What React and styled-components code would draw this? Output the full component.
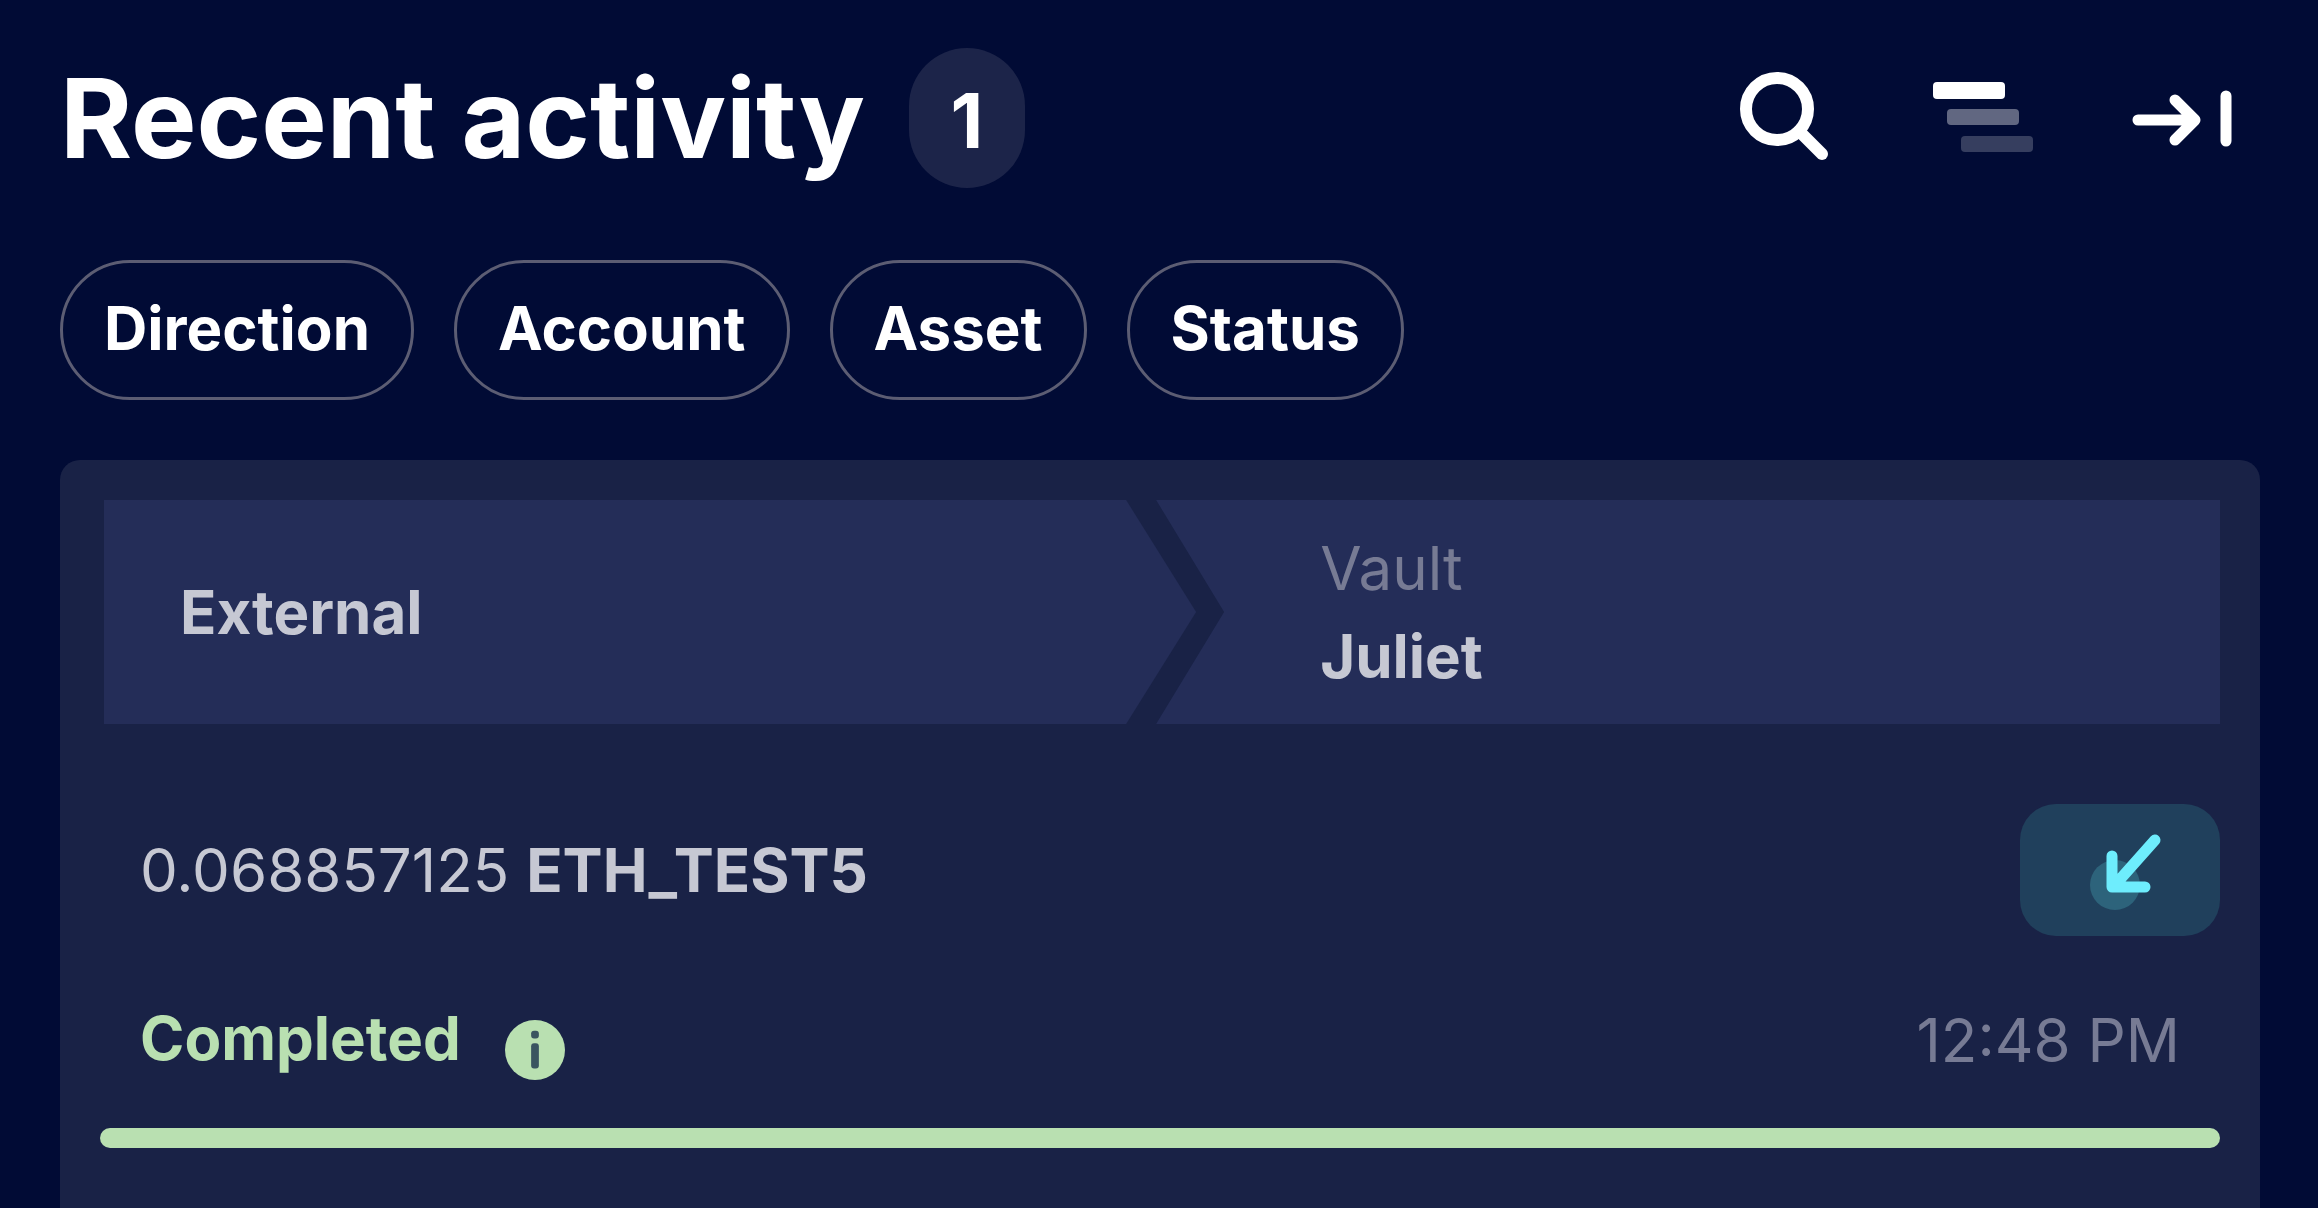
import styled, { createGlobalStyle } from "styled-components";

const GlobalStyle = createGlobalStyle`
  * {
    box-sizing: border-box;
  }
  body {
    margin: 0;
    background: #010b35;
    font-family: Inter, "Open Sans", sans-serif;
    font-size: 60px;
    line-height: 88px;
    color: #c6c8d3;
  }
`;

const Page = styled.main`
  display: flex;
  flex-direction: column;
  min-height: 100vh;
  padding: 48px 58px 0 60px;
`;

const Header = styled.header`
  display: flex;
  align-items: center;
  justify-content: space-between;
  padding-right: 28px;
`;

const Heading = styled.div`
  display: flex;
  align-items: center;
  gap: 44px;
`;

const Title = styled.h1`
  margin: 0;
  font-size: 110px;
  line-height: 140px;
  font-weight: 700;
  color: #fff;
`;

const Count = styled.span`
  width: 116px;
  height: 140px;
  border-radius: 58px;
  background: #1c2449;
  color: #fff;
  font-size: 76px;
  line-height: 144px;
  font-weight: 700;
  text-align: center;
`;

const Actions = styled.div`
  display: flex;
  align-items: center;
  gap: 98px;
`;

const IconButton = styled.button`
  display: flex;
  padding: 0;
  border: none;
  background: none;
  cursor: pointer;
`;

const Filters = styled.div`
  display: flex;
  gap: 40px;
  margin-top: 72px;
`;

const Filter = styled.button`
  height: 140px;
  padding: 0 41px 4px;
  border: 3px solid #5c5d73;
  border-radius: 70px;
  background: none;
  color: #fff;
  font: inherit;
  font-weight: 700;
  cursor: pointer;
`;

const Card = styled.section`
  flex: 1;
  margin-top: 60px;
  padding: 40px;
  border-radius: 20px 20px 0 0;
  background: #192246;
`;

const Route = styled.div`
  display: grid;
  grid-template-columns: 16fr 15fr;
  height: 224px;
  padding-left: 4px;
`;

const Party = styled.div`
  display: flex;
  flex-direction: column;
  justify-content: center;
  background: #242d58;
`;

const Source = styled(Party)`
  padding-left: 76px;
  clip-path: polygon(0 0, calc(100% - 70px) 0, 100% 50%, calc(100% - 70px) 100%, 0 100%);
`;

const Destination = styled(Party)`
  margin-left: -40px;
  padding-left: 164px;
  clip-path: polygon(0 0, 100% 0, 100% 100%, 0 100%, 68px 50%);
`;

const Muted = styled.span`
  color: #777b94;
`;

const Strong = styled.span`
  font-weight: 700;
`;

const AmountRow = styled.div`
  display: flex;
  align-items: center;
  justify-content: space-between;
  margin-top: 80px;
  padding-left: 40px;
`;

const Incoming = styled.span`
  display: flex;
  align-items: center;
  justify-content: center;
  width: 200px;
  height: 132px;
  border-radius: 36px;
  background: #20405c;
`;

const StatusRow = styled.div`
  display: flex;
  align-items: flex-start;
  justify-content: space-between;
  margin-top: 60px;
  padding: 0 40px;
`;

const Status = styled.div`
  display: flex;
  align-items: flex-end;
  gap: 44px;
  line-height: 84px;
  color: #b9e0b1;
  font-weight: 700;
`;

const Progress = styled.div`
  height: 20px;
  margin-top: 44px;
  border-radius: 10px;
  background: #b9e0b1;
`;

const SearchIcon = () => (
  <svg width="96" height="96" viewBox="0 0 96 96" fill="none" stroke="#fff" strokeWidth="12" strokeLinecap="round">
    <circle cx="39" cy="39" r="31" />
    <path d="M61 61 84 84" />
  </svg>
);

const DensityIcon = () => (
  <svg width="102" height="72" viewBox="0 0 102 72" fill="#fff">
    <rect x="1" y="0" width="72" height="17" rx="4" />
    <rect x="15" y="27" width="72" height="16" rx="4" opacity="0.38" />
    <rect x="29" y="54" width="72" height="16" rx="4" opacity="0.21" />
  </svg>
);

const CollapseIcon = () => (
  <svg width="100" height="60" viewBox="0 0 100 60" fill="none" stroke="#fff" strokeWidth="11" strokeLinecap="round" strokeLinejoin="round">
    <path d="M6 32H62M43 12 63 32 43 52" />
    <path d="M94 8V53" />
  </svg>
);

const IncomingIcon = () => (
  <svg width="86" height="88" viewBox="-10 -5 86 88" fill="none">
    <circle cx="28" cy="54" r="25" fill="#2d637b" />
    <path d="M68 9 28 54M25 25V56H58" stroke="#6eedfd" strokeWidth="11" strokeLinecap="round" strokeLinejoin="round" />
  </svg>
);

const InfoIcon = () => (
  <svg width="60" height="60" viewBox="0 0 62 62">
    <circle cx="31" cy="31" r="31" fill="#b9e0b1" />
    <rect x="27" y="11" width="8" height="8" rx="3" fill="#3a5560" />
    <rect x="27" y="24" width="8" height="26" rx="3" fill="#3a5560" />
  </svg>
);

const filters = ["Direction", "Account", "Asset", "Status"];

const App = () => {
  return (
    <>
      <GlobalStyle />
      <Page>
        <Header>
          <Heading>
            <Title>Recent activity</Title>
            <Count>1</Count>
          </Heading>
          <Actions>
            <IconButton aria-label="Search">
              <SearchIcon />
            </IconButton>
            <IconButton aria-label="Density">
              <DensityIcon />
            </IconButton>
            <IconButton aria-label="Collapse">
              <CollapseIcon />
            </IconButton>
          </Actions>
        </Header>
        <Filters>
          {filters.map((name) => (
            <Filter key={name}>{name}</Filter>
          ))}
        </Filters>
        <Card>
          <Route>
            <Source>
              <Strong>External</Strong>
            </Source>
            <Destination>
              <Muted>Vault</Muted>
              <Strong>Juliet</Strong>
            </Destination>
          </Route>
          <AmountRow>
            <span>
              0.068857125 <Strong>ETH_TEST5</Strong>
            </span>
            <Incoming>
              <IncomingIcon />
            </Incoming>
          </AmountRow>
          <StatusRow>
            <Status>
              Completed
              <InfoIcon />
            </Status>
            <Muted>12:48 PM</Muted>
          </StatusRow>
          <Progress />
        </Card>
      </Page>
    </>
  );
};

export default App;
